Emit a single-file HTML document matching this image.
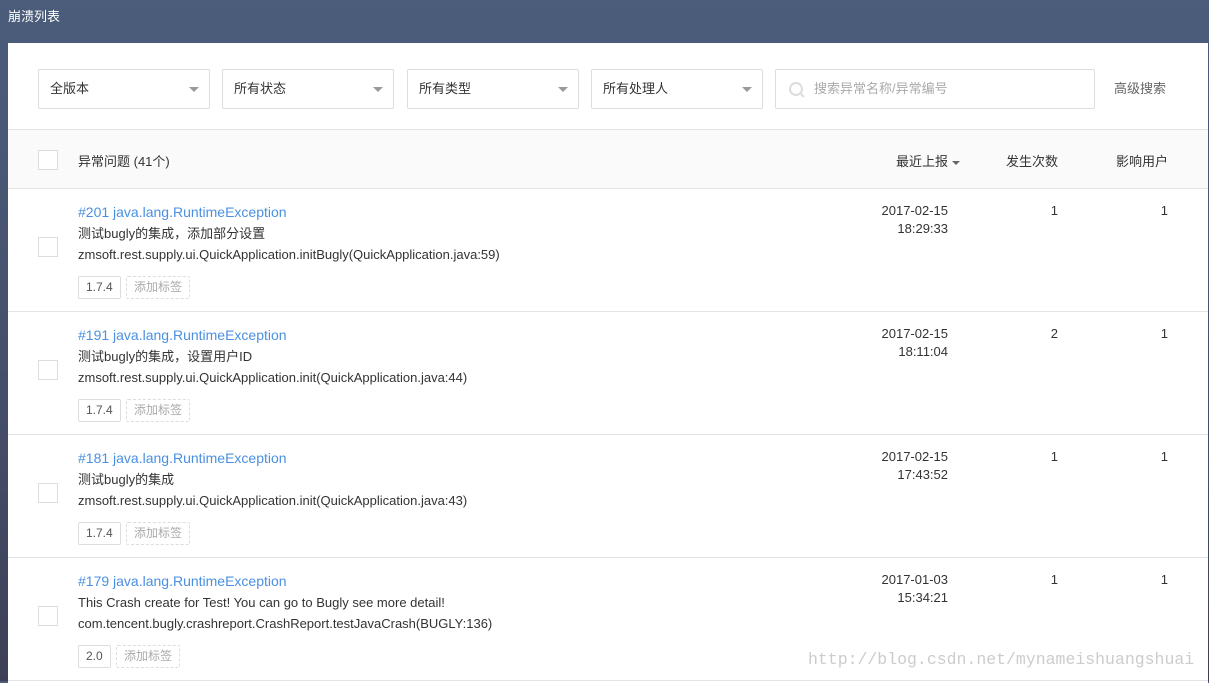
<!DOCTYPE html>
<html><head><meta charset="utf-8"><style>
*{box-sizing:border-box;margin:0;padding:0}
body{width:1209px;height:681px;overflow:hidden;background:linear-gradient(180deg,#4b5d7b 0%,#454e69 60%,#3e3f57 100%);font-family:"Liberation Sans","Noto Sans CJK SC",sans-serif;font-size:13px;color:#333;position:relative}
.title{position:absolute;left:8px;top:6px;color:#fff;font-size:13px}
.card{position:absolute;left:8px;top:43px;width:1200px;height:640px;background:#fff}
.sel{position:absolute;top:26px;height:40px;border:1px solid #ddd;border-radius:2px;padding-left:11px;line-height:38px;color:#333}
.sel:after{content:"";position:absolute;right:10px;top:17px;border-left:5px solid transparent;border-right:5px solid transparent;border-top:5px solid #999}
.search{position:absolute;left:767px;top:26px;width:320px;height:40px;border:1px solid #ddd;border-radius:2px;color:#aaa;line-height:38px;padding-left:38px}
.adv{position:absolute;left:1106px;top:35px;color:#666}
.head{position:absolute;left:0;top:86px;width:1200px;height:60px;background:#fafafa;border-top:1px solid #e3e3e3;border-bottom:1px solid #e3e3e3}
.cb{position:absolute;left:30px;width:20px;height:20px;border:1px solid #ddd;background:#fff}
.row{position:absolute;left:0;width:1200px;height:123px;border-bottom:1px solid #e3e3e3}
.t{position:absolute;left:70px;line-height:21px;white-space:nowrap}
.link{color:#4a90e2;font-size:14px}
.tag{position:absolute;top:87px;height:23px;line-height:21px;padding:0 7px;border:1px solid #ddd;border-radius:2px;font-size:12px;color:#555;background:#fff}
.add{position:absolute;top:87px;height:23px;line-height:21px;padding:0 7px;border:1px dashed #ddd;border-radius:2px;font-size:12px;color:#aaa}
.date{position:absolute;right:260px;top:13px;text-align:right;line-height:18px;color:#333}
.n1{position:absolute;right:150px;top:13px;line-height:18px}
.n2{position:absolute;right:40px;top:13px;line-height:18px}
.wm{position:absolute;left:808px;top:650px;font-family:"Liberation Mono",monospace;font-size:16.5px;color:#ccc;white-space:nowrap}
</style></head><body>
<div class="title">崩溃列表</div>
<div class="card">
<div class="sel" style="left:30px;width:172px">全版本</div>
<div class="sel" style="left:214px;width:172px">所有状态</div>
<div class="sel" style="left:399px;width:172px">所有类型</div>
<div class="sel" style="left:583px;width:172px">所有处理人</div>
<div class="search"><svg style="position:absolute;left:12px;top:11px" width="18" height="18" viewBox="0 0 18 18"><circle cx="8" cy="8" r="6" fill="none" stroke="#ddd" stroke-width="2"/><line x1="12.5" y1="12.5" x2="16" y2="16" stroke="#ddd" stroke-width="2"/></svg>搜索异常名称/异常编号</div>
<div class="adv">高级搜索</div>
<div class="head">
<div class="cb" style="top:20px"></div>
<div style="position:absolute;left:70px;top:21px">异常问题 (41个)</div>
<div style="position:absolute;left:888px;top:21px">最近上报 <span style="display:inline-block;border-left:4px solid transparent;border-right:4px solid transparent;border-top:4px solid #666;vertical-align:middle"></span></div>
<div style="position:absolute;left:998px;top:21px">发生次数</div>
<div style="position:absolute;left:1108px;top:21px">影响用户</div>
</div>

<div class="row" style="top:146px">
<div class="cb" style="top:48px"></div>
<div class="t link" style="top:13px">#201 java.lang.RuntimeException</div>
<div class="t" style="top:34px">测试bugly的集成，添加部分设置</div>
<div class="t" style="top:55px">zmsoft.rest.supply.ui.QuickApplication.initBugly(QuickApplication.java:59)</div>
<div class="tag" style="left:70px">1.7.4</div><div class="add" style="left:118px">添加标签</div>
<div class="date">2017-02-15<br>18:29:33</div><div class="n1">1</div><div class="n2">1</div>
</div>
<div class="row" style="top:269px">
<div class="cb" style="top:48px"></div>
<div class="t link" style="top:13px">#191 java.lang.RuntimeException</div>
<div class="t" style="top:34px">测试bugly的集成，设置用户ID</div>
<div class="t" style="top:55px">zmsoft.rest.supply.ui.QuickApplication.init(QuickApplication.java:44)</div>
<div class="tag" style="left:70px">1.7.4</div><div class="add" style="left:118px">添加标签</div>
<div class="date">2017-02-15<br>18:11:04</div><div class="n1">2</div><div class="n2">1</div>
</div>
<div class="row" style="top:392px">
<div class="cb" style="top:48px"></div>
<div class="t link" style="top:13px">#181 java.lang.RuntimeException</div>
<div class="t" style="top:34px">测试bugly的集成</div>
<div class="t" style="top:55px">zmsoft.rest.supply.ui.QuickApplication.init(QuickApplication.java:43)</div>
<div class="tag" style="left:70px">1.7.4</div><div class="add" style="left:118px">添加标签</div>
<div class="date">2017-02-15<br>17:43:52</div><div class="n1">1</div><div class="n2">1</div>
</div>
<div class="row" style="top:515px">
<div class="cb" style="top:48px"></div>
<div class="t link" style="top:13px">#179 java.lang.RuntimeException</div>
<div class="t" style="top:34px">This Crash create for Test! You can go to Bugly see more detail!</div>
<div class="t" style="top:55px">com.tencent.bugly.crashreport.CrashReport.testJavaCrash(BUGLY:136)</div>
<div class="tag" style="left:70px">2.0</div><div class="add" style="left:108px">添加标签</div>
<div class="date">2017-01-03<br>15:34:21</div><div class="n1">1</div><div class="n2">1</div>
</div>
</div>
<div class="wm">http://blog.csdn.net/mynameishuangshuai</div>
</body></html>
